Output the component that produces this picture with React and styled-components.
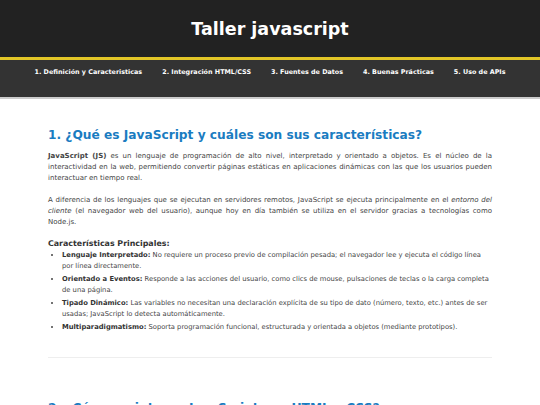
import React from "react";
import styled, { createGlobalStyle } from "styled-components";

const Global = createGlobalStyle`
  html, body { margin: 0; padding: 0; background: #ffffff; }
  body { font-family: "DejaVu Sans", Verdana, sans-serif; }
  * { box-sizing: border-box; }
`;

const Header = styled.header`
  background: #222222;
  height: 57px;
  display: flex;
  align-items: center;
  justify-content: center;
`;

const Title = styled.h1`
  margin: 0;
  color: #ffffff;
  font-size: 17.5px;
  font-weight: bold;
`;

const Nav = styled.nav`
  background: #333333;
  border-top: 3px solid #e2c627;
  border-bottom: 2px solid #cccccc;
  height: 42px;
  display: flex;
  justify-content: center;
  align-items: flex-start;
  padding-top: 8px;
  gap: 20px;
`;

const NavLink = styled.a`
  color: #ffffff;
  font-size: 6.4px;
  font-weight: bold;
  text-decoration: none;
`;

const Main = styled.main`
  padding: 29px 48px 0 48px;
`;

const Section = styled.section`
  padding-bottom: 21px;
  border-bottom: 1px solid #eeeeee;
  margin-bottom: 43px;
`;

const H2 = styled.h2`
  margin: 0 0 9px 0;
  color: #1a7cc1;
  font-size: 12.2px;
  font-weight: bold;
`;

const P = styled.p`
  margin: 0 0 11px 0;
  color: #444444;
  font-size: 7px;
  line-height: 11px;
  text-align: justify;
`;

const H3 = styled.h3`
  margin: 8px 0 2px 0;
  color: #333333;
  font-size: 7.9px;
  font-weight: bold;
`;

const List = styled.ul`
  margin: 0;
  padding-left: 14px;
`;

const Item = styled.li`
  color: #444444;
  font-size: 6.78px;
  line-height: 10.5px;
  margin-bottom: 3px;
  b { color: #333333; }
`;

const navItems = [
  "1. Definición y Caracteristicas",
  "2. Integración HTML/CSS",
  "3. Fuentes de Datos",
  "4. Buenas Prácticas",
  "5. Uso de APIs",
];

export default function App() {
  return (
    <>
      <Global />
      <Header>
        <Title>Taller javascript</Title>
      </Header>
      <Nav>
        {navItems.map((n) => (
          <NavLink key={n} href="#">{n}</NavLink>
        ))}
      </Nav>
      <Main>
        <Section>
          <H2>1. ¿Qué es JavaScript y cuáles son sus características?</H2>
          <P>
            <b>JavaScript (JS)</b> es un lenguaje de programación de alto nivel, interpretado y orientado a objetos. Es el núcleo de la interactividad en la web, permitiendo convertir páginas estáticas en aplicaciones dinámicas con las que los usuarios pueden interactuar en tiempo real.
          </P>
          <P>
            A diferencia de los lenguajes que se ejecutan en servidores remotos, JavaScript se ejecuta principalmente en el <i>entorno del cliente</i> (el navegador web del usuario), aunque hoy en día también se utiliza en el servidor gracias a tecnologías como Node.js.
          </P>
          <H3>Características Principales:</H3>
          <List>
            <Item><b>Lenguaje Interpretado:</b> No requiere un proceso previo de compilación pesada; el navegador lee y ejecuta el código línea por línea directamente.</Item>
            <Item><b>Orientado a Eventos:</b> Responde a las acciones del usuario, como clics de mouse, pulsaciones de teclas o la carga completa de una página.</Item>
            <Item><b>Tipado Dinámico:</b> Las variables no necesitan una declaración explícita de su tipo de dato (número, texto, etc.) antes de ser usadas; JavaScript lo detecta automáticamente.</Item>
            <Item><b>Multiparadigmatismo:</b> Soporta programación funcional, estructurada y orientada a objetos (mediante prototipos).</Item>
          </List>
        </Section>
        <Section>
          <H2>2. ¿Cómo se integra JavaScript con HTML y CSS?</H2>
        </Section>
      </Main>
    </>
  );
}
